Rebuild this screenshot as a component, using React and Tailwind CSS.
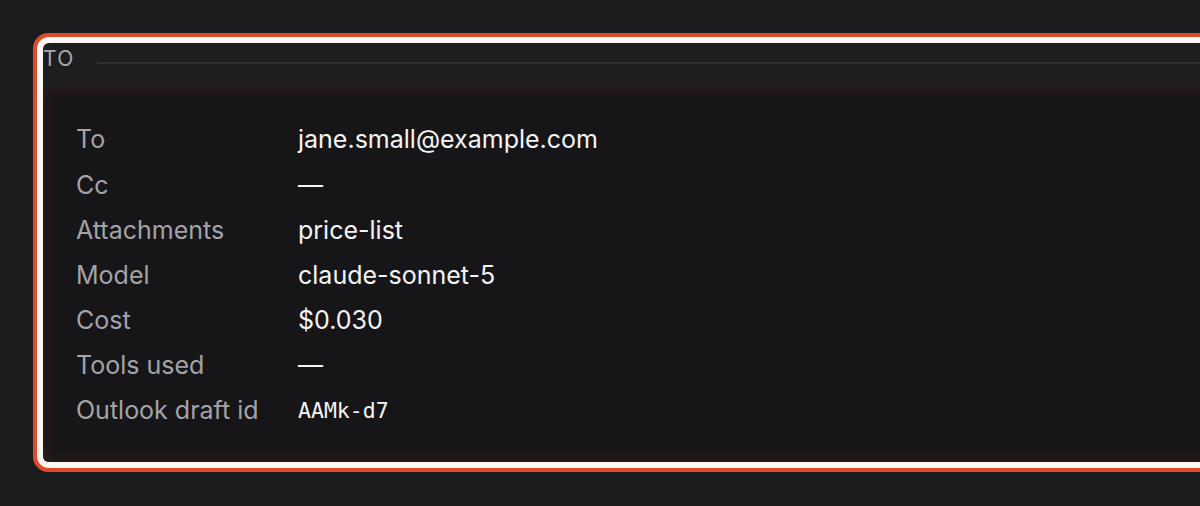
const rows = [
  { label: "To", value: "jane.small@example.com" },
  { label: "Cc", value: "—" },
  { label: "Attachments", value: "price-list" },
  { label: "Model", value: "claude-sonnet-5" },
  { label: "Cost", value: "$0.030" },
  { label: "Tools used", value: "—" },
  { label: "Outlook draft id", value: "AAMk-d7", mono: true },
];

export default function App() {
  return (
    <div
      className="h-[506px] w-[1200px] overflow-hidden bg-[#1c1c1f] pl-[43px] pt-[43px]"
      style={{ fontFamily: "Inter, 'Noto Sans', sans-serif" }}
    >
      <section className="w-[1220px] rounded-[6px] bg-[#1e1e21] shadow-[0_0_0_6px_#fbf7f2,0_0_0_10px_#e04a2c]">
        <div className="flex h-[44px] items-start">
          <span className="pt-[4px] text-[21px] leading-[24px] tracking-[0.06em] text-[#a9a9ad]">
            TO
          </span>
          <div className="ml-[22px] mt-[19px] h-[2px] flex-1 bg-[#2e2f33]" />
        </div>
        <div className="rounded-tl-[10px] rounded-b-[6px] bg-[#161618] pb-[30px] pl-[33px] pt-[29px] shadow-[inset_0_0_14px_rgba(224,74,44,0.18)]">
          {rows.map((r) => (
            <div key={r.label} className="grid h-[45.2px] grid-cols-[222px_1fr] items-center">
              <span className="pt-[3px] text-[25px] text-[#a3a3a8]">{r.label}</span>
              {r.mono ? (
                <span
                  className="pt-[3px] text-[21.5px] text-[#f4f4f5]"
                  style={{ fontFamily: "'DejaVu Sans Mono', 'Liberation Mono', monospace" }}
                >
                  {r.value}
                </span>
              ) : (
                <span className="pt-[3px] text-[25px] text-[#f4f4f5]">{r.value}</span>
              )}
            </div>
          ))}
        </div>
      </section>
    </div>
  );
}
